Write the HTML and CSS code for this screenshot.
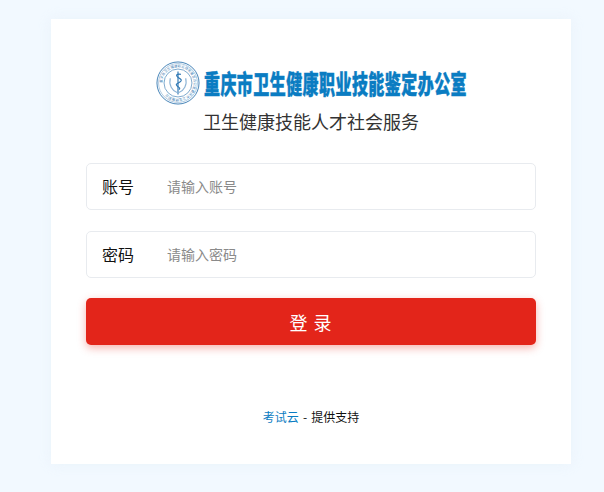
FILE: index.html
```html
<!DOCTYPE html>
<html lang="zh-CN">
<head>
<meta charset="utf-8">
<title>登录</title>
<link rel="stylesheet" href="styles.css">
</head>
<body>
<main class="card">
  <div class="brand">
    <svg class="seal" width="44" height="44" viewBox="0 0 46 46" aria-hidden="true">
      <defs><path id="ring" d="M23 23 m-16.4 0 a16.4 16.4 0 1 1 32.8 0 a16.4 16.4 0 1 1 -32.8 0"/></defs>
      <circle cx="23" cy="23" r="22" fill="none" stroke="#3f7fb5" stroke-width="1"/>
      <circle cx="23" cy="23" r="20.3" fill="none" stroke="#7aa6cc" stroke-width=".6"/>
      <circle cx="23" cy="23" r="14.6" fill="none" stroke="#5a90bf" stroke-width=".8"/>
      <text class="seal-text"><textPath href="#ring">重庆市卫生健康职业技能鉴定办公室重庆市卫生健康职业</textPath></text>
      <path d="M23 11v24" stroke="#2f78b4" stroke-width="1.2"/>
      <path d="M26 14c-4-1-6 1-3 3s5 3 2 5-5 2-3 4 4 2 2 4" fill="none" stroke="#2f78b4" stroke-width="1.2"/>
      <path d="M15 18c-2 7 2 13 7 15M31 18c2 7-2 13-7 15" fill="none" stroke="#8fb5d6" stroke-width="1.2"/>
    </svg>
    <span class="brand-name">重庆市卫生健康职业技能鉴定办公室</span>
  </div>
  <h1 class="subtitle">卫生健康技能人才社会服务</h1>
  <form class="form">
    <label class="field">
      <span class="field-label">账号</span>
      <input class="field-input" type="text" placeholder="请输入账号">
    </label>
    <label class="field">
      <span class="field-label">密码</span>
      <input class="field-input" type="password" placeholder="请输入密码">
    </label>
    <button class="submit" type="button">登 录</button>
  </form>
  <p class="footer"><a class="footer-link" href="#">考试云</a> - 提供支持</p>
</main>
</body>
</html>
```
FILE: styles.css
```css
* { box-sizing: border-box; }
html, body { margin: 0; height: 100%; }
body {
  background: #f2f9ff;
  font-family: "Noto Sans CJK SC", "Liberation Sans", sans-serif;
  overflow: hidden;
}
.card {
  width: 520px;
  height: 445px;
  margin: 19px 0 0 51px;
  padding: 40px 35px 0;
  background: #fff;
  box-shadow: 0 0 12px rgba(225, 235, 245, .45);
}
.brand {
  display: flex;
  align-items: center;
  justify-content: center;
  gap: 4px;
  height: 48px;
  padding-left: 1px;
}
.seal { flex: none; }
.seal-text { font-size: 3.6px; fill: #3f7fb5; }
.brand-name {
  font-size: 16px;
  font-weight: 900;
  line-height: 24px;
  letter-spacing: .44px;
  color: #0a7cc2;
  -webkit-text-stroke: .3px #0a7cc2;
  white-space: nowrap;
  transform: scaleY(1.6);
}
.subtitle {
  margin: 1px 0 0;
  font-size: 18px;
  font-weight: 400;
  line-height: 26px;
  color: #333;
  text-align: center;
}
.form {
  display: flex;
  flex-direction: column;
  gap: 21px;
  margin-top: 29px;
}
.field {
  display: flex;
  align-items: center;
  height: 47px;
  padding: 0 0 1px 15px;
  background: #fff;
  border: 1px solid #e8ebef;
  border-radius: 5px;
}
.field-label {
  width: 65px;
  flex: none;
  font-size: 16px;
  color: #111;
}
.field-input {
  flex: 1;
  min-width: 0;
  border: 0;
  outline: 0;
  padding: 0;
  background: transparent;
  font: inherit;
  font-size: 14px;
}
.field-input::placeholder { color: #8a8a8a; opacity: 1; }
.submit {
  height: 47px;
  margin-top: -1px;
  border: 0;
  border-radius: 5px;
  background: #e3251a;
  color: #fff;
  font: inherit;
  font-size: 18px;
  letter-spacing: 1px;
  box-shadow: 0 3px 8px rgba(228, 37, 24, .35);
}
.footer {
  margin: 63px 0 0;
  font-size: 12px;
  line-height: 18px;
  word-spacing: 1.5px;
  color: #111;
  text-align: center;
}
.footer-link { color: #0a7cc2; text-decoration: none; }
```
